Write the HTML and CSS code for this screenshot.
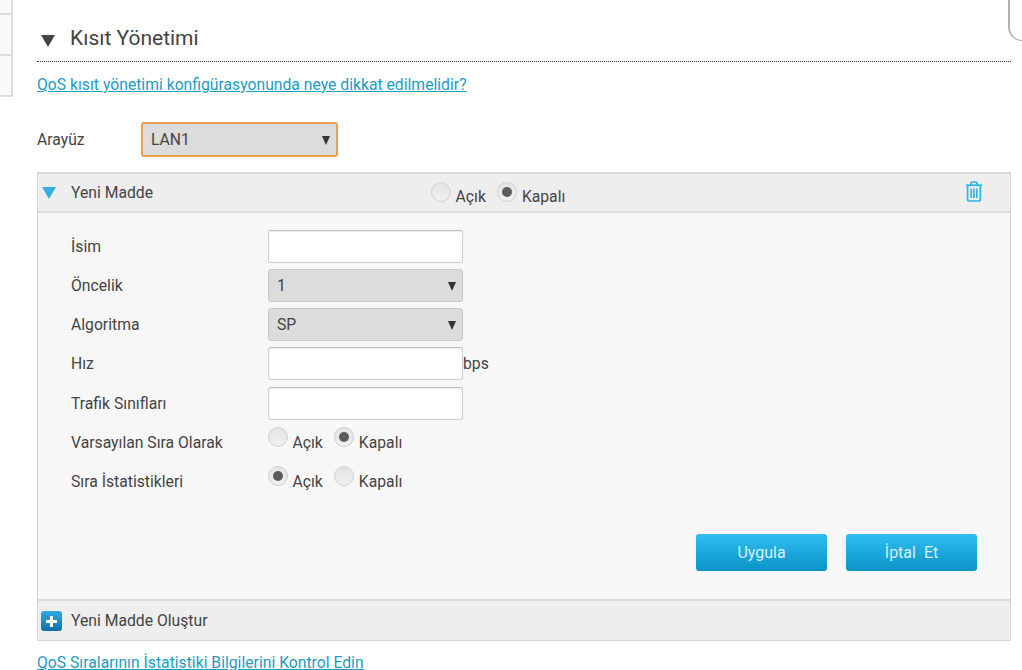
FILE: index.html
```html
<!DOCTYPE html>
<html lang="en">
<head>
  <meta charset="utf-8">
  <title>Kısıt Yönetimi</title>
  <link rel="stylesheet" href="styles.css">
</head>
<body>
  <div class="frame-corner"></div>

  <div class="page">
    <div class="side">
      <div class="side-row first"></div>
      <div class="side-row"></div>
      <div class="side-row"></div>
    </div>

    <div class="main">
      <div class="title-bar">
        <span class="arrow-dark"></span>
        <h1 class="title">Kısıt Yönetimi</h1>
      </div>

      <a class="help-link" href="#">QoS kısıt yönetimi konfigürasyonunda neye dikkat edilmelidir?</a>

      <div class="iface-row">
        <label class="iface-label">Arayüz</label>
        <div class="select select-focus">LAN1<span class="caret"></span></div>
      </div>

      <div class="panel">
        <div class="panel-head">
          <span class="arrow-blue"></span>
          <span class="head-name">Yeni Madde</span>
          <div class="radios head-radios">
            <span class="radio"></span><span class="radio-text">Açık</span>
            <span class="radio on"></span><span class="radio-text">Kapalı</span>
          </div>
          <svg class="trash" width="18" height="21" viewBox="0 0 18 21" fill="none" stroke="#2fb4e7" stroke-width="1.7">
            <path d="M1 4.2h16"/>
            <path d="M6 4V2.2C6 1.4 6.6 1 7.2 1h3.6c.6 0 1.2.4 1.2 1.2V4"/>
            <path d="M2.6 4.5v13.7c0 1 .7 1.8 1.8 1.8h9.2c1.1 0 1.8-.8 1.8-1.8V4.5"/>
            <path d="M6.2 7.5v9.5M9 7.5v9.5M11.8 7.5v9.5"/>
          </svg>
        </div>

        <div class="panel-body">
          <div class="form-row">
            <label class="form-label">İsim</label>
            <div class="text-box"></div>
          </div>
          <div class="form-row">
            <label class="form-label">Öncelik</label>
            <div class="select">1<span class="caret"></span></div>
          </div>
          <div class="form-row">
            <label class="form-label">Algoritma</label>
            <div class="select">SP<span class="caret"></span></div>
          </div>
          <div class="form-row">
            <label class="form-label">Hız</label>
            <div class="text-box"></div>
            <span class="unit">bps</span>
          </div>
          <div class="form-row">
            <label class="form-label">Trafik Sınıfları</label>
            <div class="text-box"></div>
          </div>
          <div class="form-row">
            <label class="form-label">Varsayılan Sıra Olarak</label>
            <div class="radios">
              <span class="radio"></span><span class="radio-text">Açık</span>
              <span class="radio on"></span><span class="radio-text">Kapalı</span>
            </div>
          </div>
          <div class="form-row">
            <label class="form-label">Sıra İstatistikleri</label>
            <div class="radios">
              <span class="radio on"></span><span class="radio-text">Açık</span>
              <span class="radio"></span><span class="radio-text">Kapalı</span>
            </div>
          </div>

          <div class="actions">
            <button class="btn">Uygula</button>
            <button class="btn">İptal&nbsp; Et</button>
          </div>
        </div>

        <div class="panel-foot">
          <span class="plus-icon"></span>
          <span class="foot-name">Yeni Madde Oluştur</span>
        </div>
      </div>

      <a class="stats-link" href="#">QoS Sıralarının İstatistiki Bilgilerini Kontrol Edin</a>
    </div>
  </div>
</body>
</html>
```

FILE: styles.css
```css
html, body {
  margin: 0;
  height: 670px;
  overflow: hidden;
  background: #fff;
}

body {
  position: relative;
  font-family: Roboto, "Liberation Sans", sans-serif;
  font-size: 15.72px;
  color: #444;
}

.page {
  display: flex;
}

/* left menu, only its edge shows */
.side {
  width: 13px;
  flex: none;
  height: 97px;
  box-sizing: border-box;
  border-right: 2px solid #dcdcdc;
  border-bottom: 2px solid #dcdcdc;
  background: #fafafa;
}

.side-row {
  height: 39px;
  border-bottom: 2px solid #dcdcdc;
}

.side-row.first {
  height: 13px;
}

.side-row:last-child {
  border-bottom: 0;
}

.frame-corner {
  position: absolute;
  top: -20px;
  right: -10px;
  width: 24px;
  height: 61px;
  box-sizing: border-box;
  border-left: 2px solid #b4b4b4;
  border-bottom: 1px solid #b4b4b4;
  border-bottom-left-radius: 14px;
}

.main {
  margin-left: 24px;
  width: 974px;
  flex: none;
}

.title-bar {
  display: flex;
  align-items: center;
  height: 62px;
  box-sizing: border-box;
  padding: 24px 0 9px 4px;
  border-bottom: 1px dotted #333;
}

.arrow-dark {
  width: 0;
  height: 0;
  margin-top: 6px;
  border-left: 7px solid transparent;
  border-right: 7px solid transparent;
  border-top: 12px solid #444;
}

.title {
  margin: 0 0 0 15px;
  font-size: 21px;
  font-weight: 400;
  line-height: 28px;
  color: #444;
}

.help-link, .stats-link {
  display: block;
  color: #1b9cc4;
  text-decoration: underline;
  line-height: 20px;
  white-space: nowrap;
}

.help-link {
  margin-top: 13px;
}

.iface-row {
  display: flex;
  align-items: center;
  margin-top: 27px;
}

.iface-label {
  width: 104px;
}

.select {
  position: relative;
  width: 195px;
  height: 33px;
  box-sizing: border-box;
  padding-left: 8px;
  line-height: 31px;
  background: #dcdcdc;
  border: 1px solid #c8c8c8;
  border-radius: 3px;
}

.select-focus {
  width: 197px;
  height: 35px;
  border: 2px solid #e8a24e;
  line-height: 31px;
}

.caret {
  position: absolute;
  top: 50%;
  right: 6px;
  margin-top: -4px;
  width: 0;
  height: 0;
  border-left: 4px solid transparent;
  border-right: 4px solid transparent;
  border-top: 9px solid #333;
}

.panel {
  margin-top: 15px;
  border: 1px solid #d6d6d6;
  border-width: 0 1px;
}

.panel-head {
  position: relative;
  display: flex;
  align-items: center;
  height: 41px;
  box-sizing: border-box;
  background: #eeeeee;
  border-top: 2px solid #d9d9d9;
  border-bottom: 2px solid #dedede;
}

.arrow-blue {
  width: 0;
  height: 0;
  margin-left: 4px;
  border-left: 7px solid transparent;
  border-right: 7px solid transparent;
  border-top: 12px solid #37b0e0;
}

.head-name {
  margin-left: 15px;
}

.head-radios {
  margin-top: 8px;
  margin-left: 278px;
}

.trash {
  position: absolute;
  top: 7px;
  right: 27px;
}

.panel-body {
  height: 386px;
  box-sizing: border-box;
  padding: 17.15px 0 0 33px;
  background: #f7f7f7;
}

.form-row {
  display: flex;
  align-items: center;
  height: 33px;
  margin-bottom: 6.1px;
}

.form-label {
  width: 197px;
  flex: none;
}

.text-box {
  width: 195px;
  height: 33px;
  box-sizing: border-box;
  background: #fff;
  border: 1px solid #cfcfcf;
  border-top-color: #bdbdbd;
  border-radius: 3px;
  box-shadow: inset 0 1px 1px #eee;
}

.radios {
  display: flex;
  align-items: center;
}

.radio {
  position: relative;
  width: 20px;
  height: 20px;
  box-sizing: border-box;
  margin-top: -10px;
  border: 1px solid #d0d0d0;
  border-radius: 50%;
  background: linear-gradient(#e4e4e4, #f0f0f0);
}

.radio.on::after {
  content: "";
  position: absolute;
  top: 4px;
  left: 4px;
  width: 10px;
  height: 10px;
  border-radius: 50%;
  background: #5c5c5c;
}

.radio-text {
  margin: 0 11.5px 0 4.5px;
}

.actions {
  display: flex;
  justify-content: flex-end;
  gap: 19px;
  margin: 36px 33px 0 0;
}

.btn {
  width: 131px;
  height: 37px;
  padding: 0;
  font: 400 16px Roboto, "Liberation Sans", sans-serif;
  color: #d4f1fc;
  background: linear-gradient(#30bef4, #0a93c6);
  border: 0;
  border-radius: 3px;
}

.panel-foot {
  display: flex;
  align-items: center;
  height: 42px;
  box-sizing: border-box;
  background: #eeeeee;
  border-top: 2px solid #dcdcdc;
  border-bottom: 1px solid #d6d6d6;
}

.plus-icon {
  position: relative;
  width: 21px;
  height: 20px;
  margin-left: 3px;
  border-radius: 3px;
  background: linear-gradient(#2fa9e2, #0f6fa8);
}

.plus-icon::before, .plus-icon::after {
  content: "";
  position: absolute;
  background: #fff;
}

.plus-icon::before {
  left: 5px;
  top: 9px;
  width: 11px;
  height: 3px;
}

.plus-icon::after {
  left: 9px;
  top: 5px;
  width: 3px;
  height: 11px;
}

.foot-name {
  margin-left: 9px;
}

.stats-link {
  margin-top: 12px;
}
```
